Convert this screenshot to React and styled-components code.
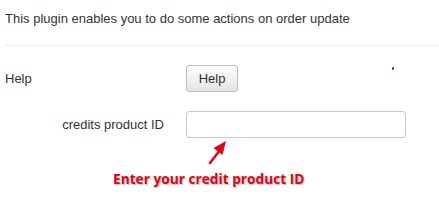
import React from "react";
import styled, { createGlobalStyle } from "styled-components";

const Global = createGlobalStyle`
  html, body { margin: 0; padding: 0; background: #fff; }
  body { font-family: "Liberation Sans", Arial, sans-serif; font-size: 13px; color: #333; }
`;

const Page = styled.div`
  position: relative;
  width: 439px;
  height: 224px;
  overflow: hidden;
  padding-left: 4px;
  box-sizing: border-box;
`;

const Description = styled.p`
  margin: 0;
  padding: 11px 0 0 1px;
  height: 46px;
  box-sizing: border-box;
  line-height: 15px;
  border-bottom: 1px solid #ececec;
`;

const Form = styled.div`
  display: flex;
  flex-direction: column;
  gap: 19px;
  padding-top: 19px;
`;

const Row = styled.div`
  display: flex;
  align-items: center;
`;

const Label = styled.label`
  width: 159px;
  padding-left: 1px;
  margin-right: 22px;
  text-align: ${(p) => (p.$right ? "right" : "left")};
`;

const Button = styled.button`
  width: 52px;
  height: 27px;
  font-family: inherit;
  font-size: 13px;
  color: #333;
  border: 1px solid #bdbdbd;
  border-radius: 3px;
  background: linear-gradient(#ffffff, #e4e4e4);
  padding: 0;
`;

const Input = styled.input`
  width: 220px;
  height: 27px;
  box-sizing: border-box;
  border: 1px solid #c8c8c8;
  border-radius: 3px;
  background: #fff;
  padding: 0 6px;
  font: inherit;
`;

const Annotation = styled.div`
  position: absolute;
  left: 113px;
  top: 139px;
`;

const Arrow = styled.svg`
  position: absolute;
  left: 94px;
  top: 1px;
`;

const Callout = styled.div`
  position: absolute;
  left: 0;
  top: 30px;
  white-space: nowrap;
  font-family: "Open Sans", "DejaVu Sans", sans-serif;
  font-weight: 700;
  font-size: 13.7px;
  color: #e60012;
  text-shadow: 1px 1px 1px #bdbdbd;
`;

const Dot = styled.span`
  position: absolute;
  left: 392px;
  top: 67px;
  width: 2px;
  height: 3px;
  background: #d8001a;
  border-radius: 1px;
`;

export default function App() {
  return (
    <>
      <Global />
      <Page>
        <Description>This plugin enables you to do some actions on order update</Description>
        <Form>
          <Row>
            <Label>Help</Label>
            <Button>Help</Button>
          </Row>
          <Row>
            <Label $right>credits product ID</Label>
            <Input type="text" />
          </Row>
        </Form>
        <Dot />
        <Annotation>
          <Arrow width="24" height="26" viewBox="0 0 24 26">
            <path d="M3 23 L13 10" stroke="#e60012" strokeWidth="2.4" strokeLinecap="round" />
            <path d="M19 1 L6.5 8 L15.5 15 Z" fill="#e60012" />
          </Arrow>
          <Callout>Enter your credit product ID</Callout>
        </Annotation>
      </Page>
    </>
  );
}
